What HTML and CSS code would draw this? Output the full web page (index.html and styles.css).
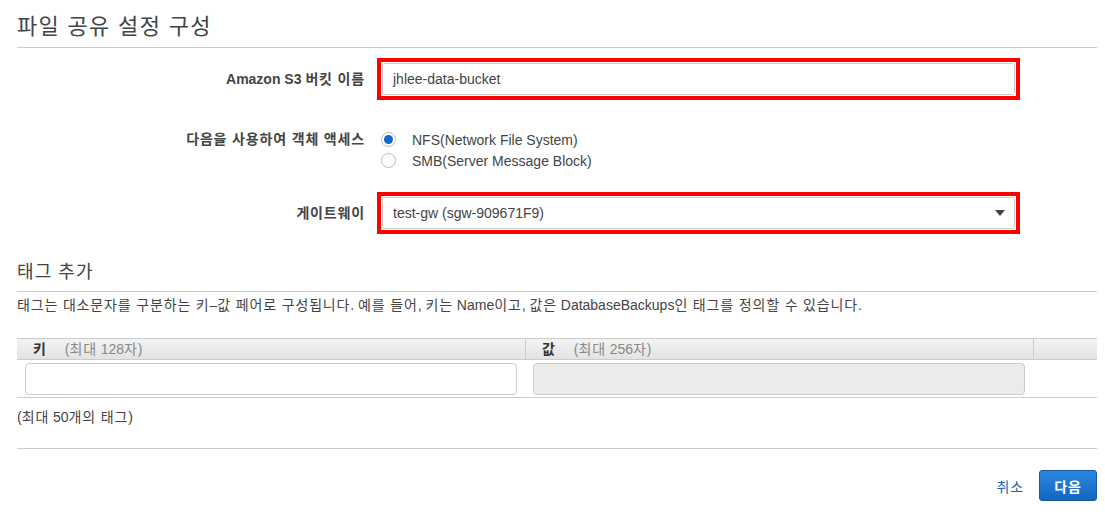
FILE: index.html
```html
<!DOCTYPE html>
<html lang="ko">
<head>
<meta charset="utf-8">
<title>파일 공유 설정 구성</title>
<link rel="stylesheet" href="styles.css">
</head>
<body>
<div class="page">
  <h1 class="title k">파일 공유 설정 구성</h1>

  <div class="form-row first">
    <div class="label">Amazon S3 <span class="k">버킷 이름</span></div>
    <div class="highlight">
      <div class="input">jhlee-data-bucket</div>
    </div>
  </div>

  <div class="form-row radio-row">
    <div class="label k">다음을 사용하여 객체 액세스</div>
    <div class="radios">
      <div class="radio-item"><span class="radio checked"></span><span>NFS(Network File System)</span></div>
      <div class="radio-item"><span class="radio"></span><span>SMB(Server Message Block)</span></div>
    </div>
  </div>

  <div class="form-row gw-row">
    <div class="label k">게이트웨이</div>
    <div class="highlight">
      <div class="input select"><span>test-gw (sgw-909671F9)</span><span class="caret"></span></div>
    </div>
  </div>

  <h2 class="subtitle k">태그 추가</h2>
  <p class="desc"><span class="k">태그는 대소문자를 구분하는 키</span>–<span class="k">값 페어로 구성됩니다</span>. <span class="k">예를 들어</span>, <span class="k">키는</span> Name<span class="k">이고</span>, <span class="k">값은</span> DatabaseBackups<span class="k">인 태그를 정의할 수 있습니다</span>.</p>

  <div class="tag-table">
    <div class="th"><b class="k">키</b><span class="hint">(<span class="k">최대</span> 128<span class="k">자</span>)</span></div>
    <div class="th sep"><b class="k">값</b><span class="hint">(<span class="k">최대</span> 256<span class="k">자</span>)</span></div>
    <div class="th sep"></div>
    <div class="td"><div class="cell-input"></div></div>
    <div class="td"><div class="cell-input disabled"></div></div>
    <div class="td"></div>
  </div>

  <p class="limit">(<span class="k">최대</span> 50<span class="k">개의 태그</span>)</p>

  <div class="actions">
    <a class="cancel k" href="#">취소</a>
    <button class="next k" type="button">다음</button>
  </div>
</div>
</body>
</html>
```
FILE: styles.css
```css
* { box-sizing: border-box; }

body {
  margin: 0;
  background: #fff;
  font-family: "Liberation Sans", "Noto Sans CJK KR", sans-serif;
  font-size: 14px;
  color: #444;
}

.k { letter-spacing: 0.06em; }

.page {
  padding: 12px 8px 0 17px;
}

.title {
  margin: 0;
  font-size: 22px;
  font-weight: normal;
  line-height: 30px;
  color: #444;
  padding-bottom: 5px;
  border-bottom: 1px solid #ccc;
}

.form-row {
  display: flex;
  align-items: center;
  gap: 12px;
}

.form-row.first { margin-top: 10px; }
.form-row.radio-row { align-items: flex-start; margin-top: 29px; }
.form-row.gw-row { margin-top: 21px; }

.label {
  width: 348px;
  flex: none;
  text-align: right;
  font-weight: bold;
  color: #444;
  line-height: 21px;
}

.highlight {
  width: 643px;
  border: 4px solid #f00;
  padding: 1px;
}

.input {
  height: 32px;
  border: 1px solid #ccc;
  border-radius: 3px;
  padding: 0 10px;
  display: flex;
  align-items: center;
  color: #444;
  background: #fff;
}

.input.select { justify-content: space-between; }

.caret {
  width: 0;
  height: 0;
  border-left: 5px solid transparent;
  border-right: 5px solid transparent;
  border-top: 6px solid #444;
  margin-right: -1px;
}

.radios {
  display: flex;
  flex-direction: column;
}

.radio-item {
  display: flex;
  align-items: center;
  height: 21px;
  gap: 16px;
  padding-left: 4px;
}

.radio {
  width: 15px;
  height: 15px;
  border: 1px solid #bbb;
  border-radius: 50%;
  background: #fff;
  display: flex;
  align-items: center;
  justify-content: center;
  flex: none;
}

.radio.checked::after {
  content: "";
  width: 9px;
  height: 9px;
  border-radius: 50%;
  background: #1467c4;
}

.subtitle {
  margin: 26px 0 0;
  font-size: 18px;
  font-weight: normal;
  line-height: 24px;
  color: #444;
  padding-bottom: 7px;
  border-bottom: 1px solid #ccc;
}

.desc {
  margin: 3px 0 0;
  line-height: 20px;
  color: #444;
}

.tag-table {
  margin-top: 23px;
  display: grid;
  grid-template-columns: 508px 508px 64px;
}

.th {
  height: 22px;
  border-top: 1px solid #ccc;
  border-bottom: 1px solid #ccc;
  background: linear-gradient(to bottom, #f3f3f3, #e3e3e3);
  display: flex;
  align-items: center;
  padding-left: 16px;
  gap: 18px;
  line-height: 20px;
  color: #333;
}

.th.sep { border-left: 1px solid #ccc; padding-left: 16px; }

.hint { color: #888; }

.td {
  padding: 3px 8px 2px;
  border-bottom: 1px solid #ccc;
}

.cell-input {
  height: 32px;
  border: 1px solid #ccc;
  border-radius: 4px;
  background: #fff;
}

.cell-input.disabled { background: #ebebeb; }

.limit {
  margin: 9px 0 0;
  line-height: 20px;
  padding-bottom: 21px;
  border-bottom: 1px solid #ccc;
  color: #444;
}

.actions {
  margin-top: 21px;
  display: flex;
  justify-content: flex-end;
  align-items: center;
  gap: 15px;
}

.cancel {
  color: #1a63b0;
  text-decoration: none;
}

.next {
  width: 58px;
  height: 31px;
  border: 1px solid #1559a3;
  border-radius: 3px;
  background: linear-gradient(to bottom, #2c86de, #1466c0);
  color: #fff;
  font-family: inherit;
  font-size: 14px;
  font-weight: bold;
  padding: 0;
}
```
